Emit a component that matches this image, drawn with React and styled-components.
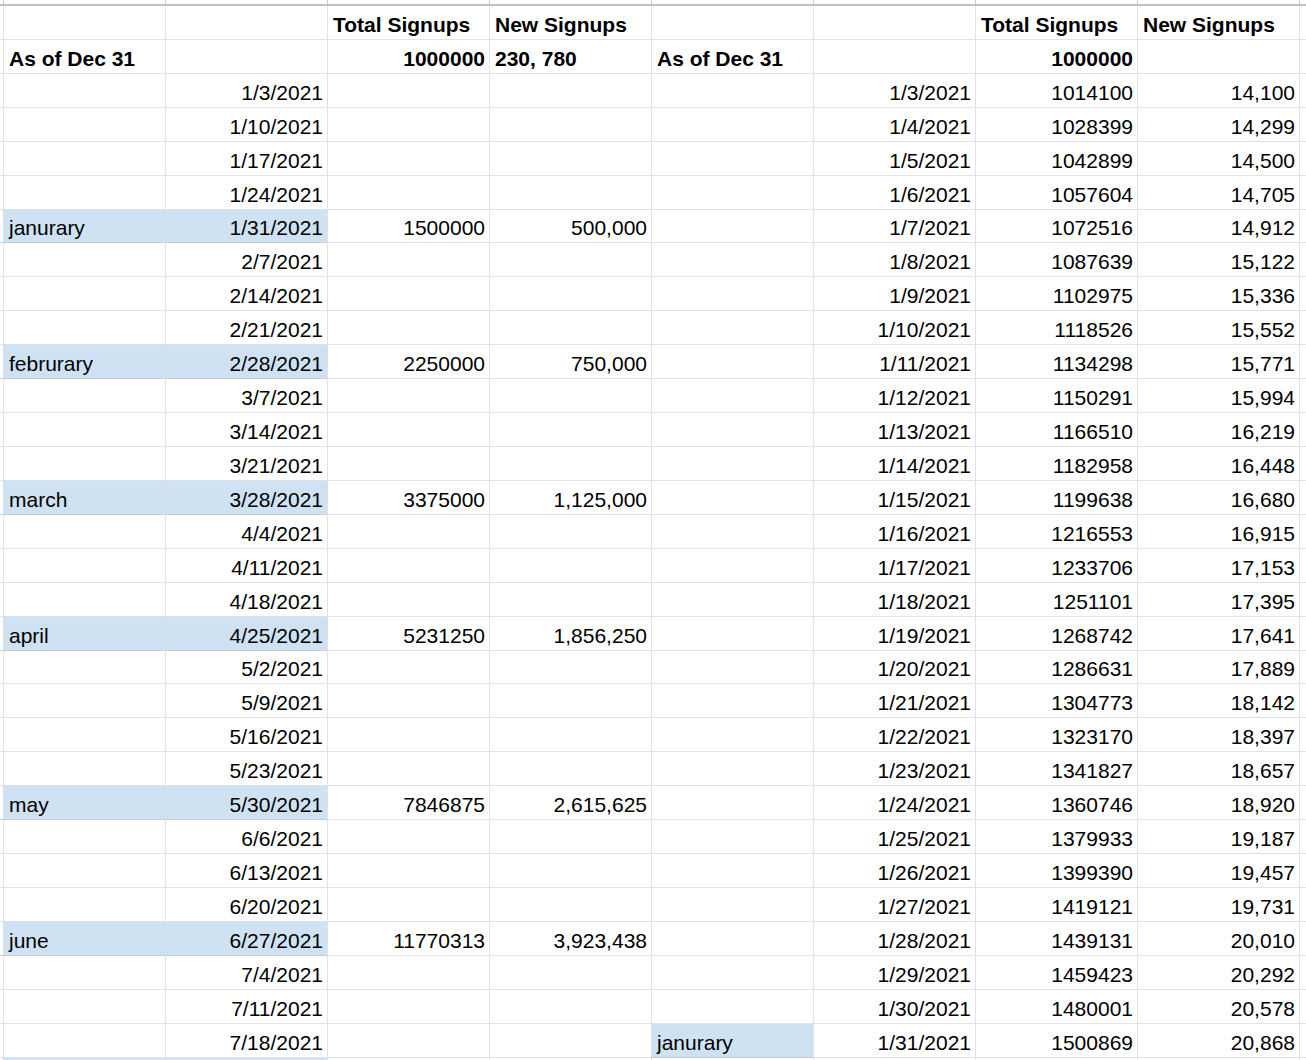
import React from 'react';
import styled, { createGlobalStyle } from 'styled-components';

const GlobalStyle = createGlobalStyle`
  body {
    margin: 0;
    background: #fff;
    font-family: 'Liberation Sans', Arial, sans-serif;
  }
`;

const COLS = '3px repeat(8, 162px) 1fr';

const Sheet = styled.div`
  width: 1306px;
  height: 1060px;
  overflow: hidden;
  background: #fff;
`;

const HeaderStrip = styled.div`
  display: grid;
  grid-template-columns: ${COLS};
  height: 4px;
  border-bottom: 2px solid #c2c2c2;
`;

const HeaderCell = styled.div`
  border-left: 1px solid #d0d0d0;
`;

const Row = styled.div`
  display: grid;
  grid-template-columns: ${COLS};
  height: 33.93px;
`;

const Gutter = styled.div`
  border-bottom: 1px solid ${p => (p.$hl ? '#bfcedb' : '#e2e2e2')};
`;

const Cell = styled.div`
  box-sizing: border-box;
  min-width: 0;
  display: flex;
  align-items: flex-end;
  justify-content: ${p => (p.$right ? 'flex-end' : 'flex-start')};
  padding: 0 4px 2px 5px;
  border-left: 1px solid ${p => (p.$hl ? '#d3dde6' : '#e2e2e2')};
  border-bottom: 1px solid ${p => (p.$hl ? '#bfcedb' : '#e2e2e2')};
  background: ${p => (p.$hl ? '#cfe2f3' : '#fff')};
  color: #000;
  font-size: 21px;
  line-height: 24px;
  font-weight: ${p => (p.$bold ? 700 : 400)};
  white-space: nowrap;
  overflow: hidden;
`;

const Tail = styled.div`
  border-left: 1px solid #e2e2e2;
  border-bottom: 1px solid #e2e2e2;
`;

const leftDates = [
  '1/3/2021', '1/10/2021', '1/17/2021', '1/24/2021', '1/31/2021',
  '2/7/2021', '2/14/2021', '2/21/2021', '2/28/2021',
  '3/7/2021', '3/14/2021', '3/21/2021', '3/28/2021',
  '4/4/2021', '4/11/2021', '4/18/2021', '4/25/2021',
  '5/2/2021', '5/9/2021', '5/16/2021', '5/23/2021', '5/30/2021',
  '6/6/2021', '6/13/2021', '6/20/2021', '6/27/2021',
  '7/4/2021', '7/11/2021', '7/18/2021',
];

const monthly = {
  '1/31/2021': ['janurary', '1500000', '500,000'],
  '2/28/2021': ['februrary', '2250000', '750,000'],
  '3/28/2021': ['march', '3375000', '1,125,000'],
  '4/25/2021': ['april', '5231250', '1,856,250'],
  '5/30/2021': ['may', '7846875', '2,615,625'],
  '6/27/2021': ['june', '11770313', '3,923,438'],
};

const totals = [
  1014100, 1028399, 1042899, 1057604, 1072516, 1087639, 1102975, 1118526,
  1134298, 1150291, 1166510, 1182958, 1199638, 1216553, 1233706, 1251101,
  1268742, 1286631, 1304773, 1323170, 1341827, 1360746, 1379933, 1399390,
  1419121, 1439131, 1459423, 1480001, 1500869,
];

const fresh = [
  '14,100', '14,299', '14,500', '14,705', '14,912', '15,122', '15,336', '15,552',
  '15,771', '15,994', '16,219', '16,448', '16,680', '16,915', '17,153', '17,395',
  '17,641', '17,889', '18,142', '18,397', '18,657', '18,920', '19,187', '19,457',
  '19,731', '20,010', '20,292', '20,578', '20,868',
];

const blank = {};

const rows = [
  [
    blank, blank,
    { t: 'Total Signups', b: true }, { t: 'New Signups', b: true },
    blank, blank,
    { t: 'Total Signups', b: true }, { t: 'New Signups', b: true },
  ],
  [
    { t: 'As of Dec 31', b: true }, blank,
    { t: '1000000', b: true, r: true }, { t: '230, 780', b: true },
    { t: 'As of Dec 31', b: true }, blank,
    { t: '1000000', b: true, r: true }, blank,
  ],
  ...leftDates.map((date, i) => {
    const m = monthly[date];
    const hl = Boolean(m);
    return [
      { t: m ? m[0] : '', hl },
      { t: date, r: true, hl },
      { t: m ? m[1] : '', r: true },
      { t: m ? m[2] : '', r: true },
      i === totals.length - 1 ? { t: 'janurary', hl: true } : blank,
      { t: `1/${i + 3}/2021`, r: true },
      { t: String(totals[i]), r: true },
      { t: fresh[i], r: true },
    ];
  }),
  // july row, only its top edge shows below the fold
  [{ hl: true }, { hl: true }, blank, blank, blank, blank, blank, blank],
];

export default function App() {
  return (
    <Sheet>
      <GlobalStyle />
      <HeaderStrip>
        <div />
        {Array.from({ length: 9 }, (_, i) => <HeaderCell key={i} />)}
      </HeaderStrip>
      {rows.map((cells, ri) => (
        <Row key={ri}>
          <Gutter $hl={cells[0].hl} />
          {cells.map((c, ci) => (
            <Cell key={ci} $right={c.r} $bold={c.b} $hl={c.hl}>
              {c.t}
            </Cell>
          ))}
          <Tail />
        </Row>
      ))}
    </Sheet>
  );
}
